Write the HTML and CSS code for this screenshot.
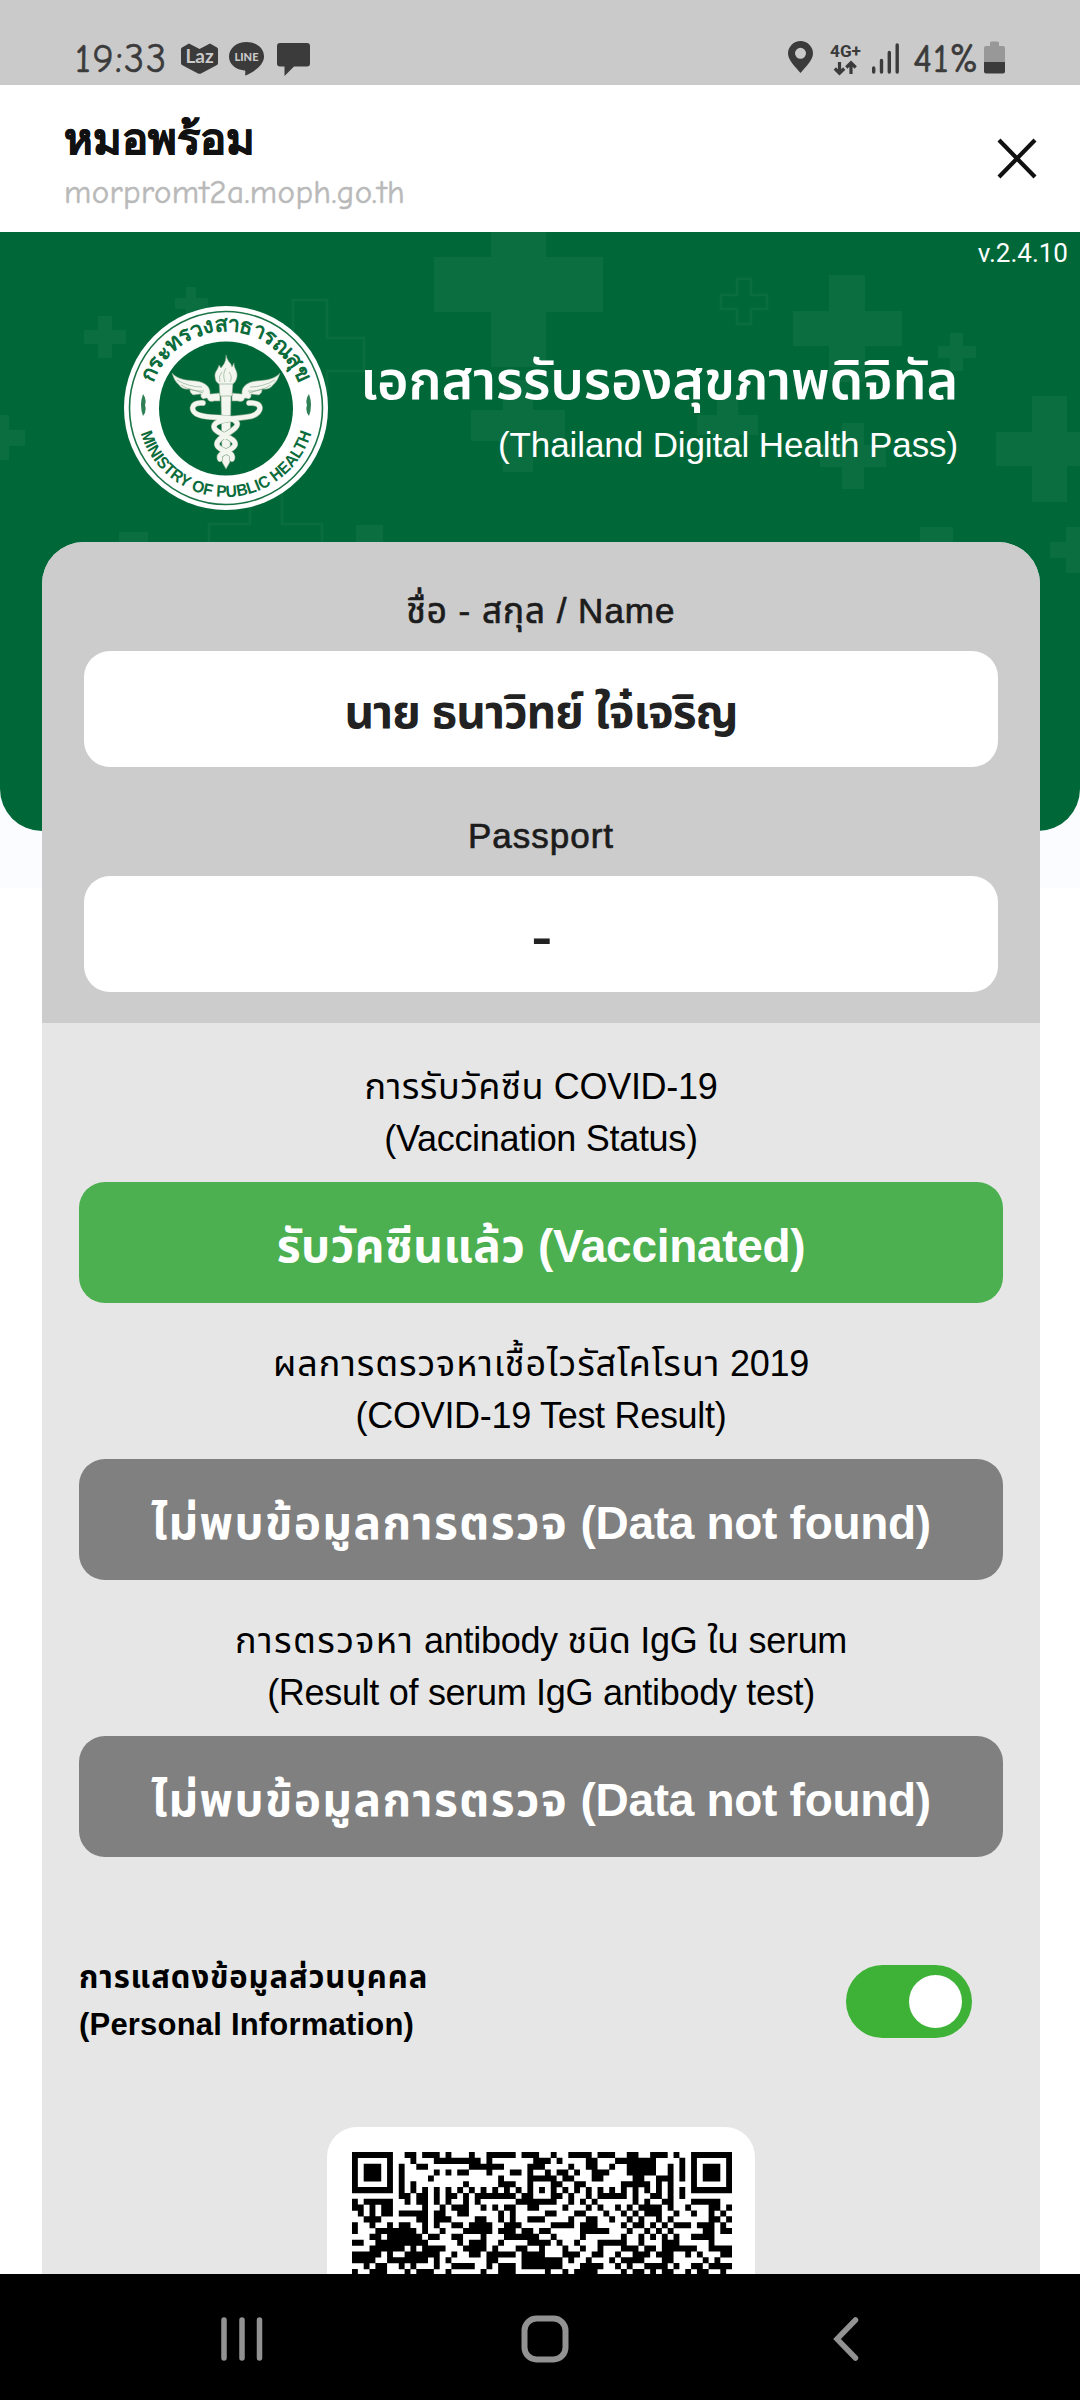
FILE: index.html
```html
<!DOCTYPE html>
<html lang="th">
<head>
<meta charset="utf-8">
<title>หมอพร้อม</title>
<link rel="stylesheet" href="styles.css">
</head>
<body>
<div class="status">
  <span class="time">19:33</span>
  <svg class="ic-laz" width="37" height="31" viewBox="0 0 37 31"><path d="M8 .5 18.500 6 29 .5 36 4.500Q37 5 37 6V20Q37 21.500 36 22L20 30.400Q18.500 31.200 17 30.400L1 22Q0 21.500 0 20V6Q0 5 1 4.500Z" fill="#3b3b3b"/><text x="18.500" y="20" class="laz-text">Laz</text></svg>
  <svg class="ic-line" width="35" height="34" viewBox="0 0 35 34"><path d="M17.500 0C27 0 35 6 35 14.500 35 22 27 29 16.500 33.500 15.500 33 17 30 16 28.500 7 28 0 22.500 0 14.500 0 6 8 0 17.500 0Z" fill="#3b3b3b"/><text x="17.500" y="19" class="line-text">LINE</text></svg>
  <svg class="ic-chat" width="33" height="34" viewBox="0 0 33 34"><path d="M3 0H30Q33 0 33 3V20.500Q33 23.500 30 23.500H17L7.500 33V23.500H3Q0 23.500 0 20.500V3Q0 0 3 0Z" fill="#3b3b3b"/></svg>
  <span class="spacer"></span>
  <svg class="ic-pin" width="25" height="32" viewBox="0 0 25 32"><path d="M12.500 0A12.500 12.500 0 0 1 25 12.500C25 19 17.500 26 12.500 32 7.500 26 0 19 0 12.500A12.500 12.500 0 0 1 12.500 0ZM12.500 6.800A5.500 5.500 0 1 0 12.500 17.800 5.500 5.500 0 1 0 12.500 6.800Z" fill="#3b3b3b" fill-rule="evenodd"/></svg>
  <svg class="ic-net" width="32" height="34" viewBox="0 0 32 34"><text x="0" y="14.500" class="net-text" textLength="31" lengthAdjust="spacingAndGlyphs">4G+</text><path d="M9.500 20V31M4.800 26.500 9.500 31.200 14.200 26.500M21 32V21M16.300 25.500 21 20.800 25.700 25.500" fill="none" stroke="#3b3b3b" stroke-width="3.200"/></svg>
  <svg class="ic-signal" width="27" height="31" viewBox="0 0 27 31"><path d="M1.700 25V29M9.500 17.500V29M17.300 9.500V29M25.200 2V29" stroke="#3b3b3b" stroke-width="3.400" stroke-linecap="round"/></svg>
  <span class="pct">41%</span>
  <svg class="ic-batt" width="21" height="33" viewBox="0 0 21 33"><path d="M6 5V2Q6 .5 7.500 .5H13.500Q15 .5 15 2V5H19Q21 5 21 7V21H0V7Q0 5 2 5Z" fill="#989898"/><path d="M0 21H21V30.500Q21 32.500 19 32.500H2Q0 32.500 0 30.500Z" fill="#3b3b3b"/></svg>
</div>

<header class="bar">
  <div class="bar-text">
    <div class="bar-title">หมอพร้อม</div>
    <div class="bar-url">morpromt2a.moph.go.th</div>
  </div>
  <svg class="close" width="40" height="41" viewBox="0 0 40 41"><path d="M2 2 38 39M38 2 2 39" stroke="#111" stroke-width="4.200"/></svg>
</header>

<main class="page">
  <section class="hero">
    <svg class="crosses" width="1080" height="599" viewBox="0 232 1080 599">
      <g class="solid">
        <path d="M98 316h14v14h14v14h-14v14H98v-14H84v-14h14z"/>
        <path d="M186 287h10v11h12v11h-12v11h-10v-11h-11v-11h11z"/>
        <path d="M-16 415H9v15h16v16H9v14h-25z"/>
        <path d="M491 232h55v25h57v55h-57v55h-55v-55h-57v-55h57z"/>
        <path d="M503 380h30v30h32v31h-32v31h-30v-31h-32v-31h32z"/>
        <path d="M119 532h29v30h-29z"/><path d="M356 525h27v30h-27z"/>
        <path d="M829 275h36v36h37v35h-37v36h-36v-36h-36v-35h36z"/>
        <path d="M950 333h13v13h13v12h-13v13h-13v-13h-12v-12h12z"/>
        <path d="M717 394h21v21h20v20h-20v21h-21v-21h-20v-20h20z"/>
        <path d="M842 423h22v22h22v22h-22v22h-22v-22h-22v-22h22z"/>
        <path d="M1032 396h35v36h37v34h-37v36h-35v-36h-36v-34h36z"/>
        <path d="M920 527h33v30h-33z"/><path d="M1066 527h30v46h-30v-15h-16v-16h16z"/>
      </g>
      <g class="outline">
        <path d="M293 300h34v38h37v33h-37v37h-34v-37h-36v-33h36z"/>
        <path d="M250 487h32v37h40v33h-40v37h-32v-37h-41v-33h41z"/>
        <path d="M737 279h14v16h16v14h-16v15h-14v-15h-16v-14h16z"/>
      </g>
    </svg>
    <span class="version">v.2.4.10</span>
    <svg class="seal" width="204" height="204" viewBox="0 0 204 204">
      <defs>
        <path id="arc-top" d="M25.500 102A76.500 76.500 0 0 1 178.500 102"/>
        <path id="arc-bottom" d="M13 102A89 89 0 0 0 191 102"/>
      </defs>
      <circle cx="102" cy="102" r="102" fill="#fff"/>
      <circle cx="102" cy="102" r="96.500" fill="none" stroke="#1b7446" stroke-width="1.600"/>
      <circle cx="102" cy="102.500" r="67" fill="#006838"/>
      <text class="seal-th"><textPath href="#arc-top" startOffset="50%" text-anchor="middle" textLength="190">กระทรวงสาธารณสุข</textPath></text>
      <text class="seal-en"><textPath href="#arc-bottom" startOffset="50%" text-anchor="middle" textLength="228" lengthAdjust="spacingAndGlyphs">MINISTRY OF PUBLIC HEALTH</textPath></text>
      <path d="M19 88q-4 11 0 22q4-5 2-11q2-6-2-11zM185 88q4 11 0 22q-4-5-2-11q-2-6 2-11z" fill="#2f7f55"/>
      <g fill="#f3f6ee" stroke="#7fa588" stroke-width=".6">
        <path d="M48 67C54 74 63 74 72 75 81 76 87 81 86 88L96 87V95H90Q85 97 83 92L79 93Q76 91 77 88L69 89Q65 86 66 83 58 84 55 79 50 75 48 67Z"/>
        <path d="M156 67C150 74 141 74 132 75 123 76 117 81 118 88L108 87V95H114Q119 97 121 92L125 93Q128 91 127 88L135 89Q139 86 138 83 146 84 149 79 154 75 156 67Z"/>
        <path d="M53 74Q65 81 78 81M57 79Q68 86 80 85M66 83 79 87M151 74Q139 81 126 81M147 79Q136 86 124 85M138 83 125 87" fill="none"/>
        <path d="M97 89H107L106 156 102 163 98 156Z"/>
        <path d="M95 77H109L108 90H96Z"/>
        <path d="M102 49C104 57 107 56 108 61L110 57C110 63 114 65 113 71Q112 76 109 78H95Q91 76 91 71C90 66 94 64 95 59L97 62C99 59 102 57 102 49Z"/>
        <path d="M96 76Q94 70 98 66M101 76Q98 68 102 62M106 76Q109 71 105 66" fill="none"/>
      </g>
      <g fill="none" stroke-linecap="round">
        <path class="snake-edge" d="M79 97C66 96 66 106 75 109 88 114 108 108 113 117 116 124 91 131 93 139 95 146 111 145 108 153M125 97C139 96 139 106 128 110 116 113 92 112 90 120 89 128 113 131 111 139 108 146 93 146 96 153"/>
        <path class="snake" d="M79 97C66 96 66 106 75 109 88 114 108 108 113 117 116 124 91 131 93 139 95 146 111 145 108 153M125 97C139 96 139 106 128 110 116 113 92 112 90 120 89 128 113 131 111 139 108 146 93 146 96 153"/>
      </g>
    </svg>
    <div class="hero-text">
      <h1 class="hero-title">เอกสารรับรองสุขภาพดิจิทัล</h1>
      <p class="hero-sub">(Thailand Digital Health Pass)</p>
    </div>
  </section>

  <article class="card">
    <section class="identity">
      <h2 class="label">ชื่อ - สกุล / Name</h2>
      <div class="field">นาย ธนาวิทย์ ใจ๋เจริญ</div>
      <h2 class="label">Passport</h2>
      <div class="field"><span class="dash">-</span></div>
    </section>
    <section class="results">
      <div class="result">
        <p class="caption"><span class="th-s">การรับวัคซีน</span> COVID-19<br>(Vaccination Status)</p>
        <div class="badge ok"><span class="th-s">รับวัคซีนแล้ว</span> (Vaccinated)</div>
      </div>
      <div class="result">
        <p class="caption"><span class="th-m">ผลการตรวจหาเชื้อไวรัสโคโรนา</span> 2019<br>(COVID-19 Test Result)</p>
        <div class="badge"><span class="th-l">ไม่พบข้อมูลการตรวจ</span> (Data not found)</div>
      </div>
      <div class="result">
        <p class="caption"><span class="th-l">การตรวจหา</span> antibody ชนิด IgG ใน serum<br>(Result of serum IgG antibody test)</p>
        <div class="badge"><span class="th-l">ไม่พบข้อมูลการตรวจ</span> (Data not found)</div>
      </div>
    </section>
    <section class="privacy">
      <p class="privacy-text"><span class="th-m">การแสดงข้อมูลส่วนบุคคล</span><br>(Personal Information)</p>
      <div class="toggle"><div class="knob"></div></div>
    </section>
    <div class="qr-card"><svg class="qr" width="380" height="380" viewBox="0 0 65 65"><path id="qr-modules"/></svg></div>
  </article>
</main>

<nav class="nav">
  <svg width="43" height="44" viewBox="0 0 43 44"><path d="M4 3V41M22 3V41M39.500 3V41" stroke="#929292" stroke-width="5.500" stroke-linecap="round"/></svg>
  <svg class="home" width="48" height="48" viewBox="0 0 48 48"><rect x="3.500" y="3.500" width="41" height="41" rx="12" fill="none" stroke="#929292" stroke-width="6"/></svg>
  <svg class="back" width="27" height="44" viewBox="0 0 27 44"><path d="M22.500 3 4 22 22.500 41" fill="none" stroke="#929292" stroke-width="5.500" stroke-linecap="round"/></svg>
</nav>
<script src="qr.js"></script>
</body>
</html>
```
FILE: styles.css
```css
* { box-sizing: border-box; }
html, body { margin: 0; height: 2400px; overflow: hidden; }
body {
  display: flex; flex-direction: column; background: #fff; color: #000;
  font-family: "Liberation Sans", "Noto Sans Thai", sans-serif;
}
h1, h2, p { margin: 0; font-weight: normal; }
svg { display: block; flex: none; }

/* status bar */
.status { height: 85px; background: #cacaca; display: flex; align-items: flex-start; padding: 0 75px 0 75px; color: #3b3b3b; flex: none; }
.time, .pct { font: 40px/50px "Comic Neue", cursive; margin-top: 34px; white-space: nowrap; -webkit-text-stroke: .6px #3b3b3b; }
.time { width: 106px; letter-spacing: 1.6px; }
.pct { width: 71px; margin-left: 14px; letter-spacing: .7px; }
.spacer { flex: 1; }
.ic-laz { margin-top: 43px; }
.ic-line { margin: 42px 0 0 11px; }
.ic-chat { margin: 43px 0 0 13px; }
.ic-pin { margin-top: 41px; }
.ic-net { margin: 42px 0 0 17px; }
.ic-signal { margin: 43px 0 0 10px; }
.ic-batt { margin-top: 41px; }
.laz-text { font: bold 19px Lato, sans-serif; fill: #cacaca; text-anchor: middle; }
.line-text { font: 900 11px Lato, sans-serif; fill: #cacaca; text-anchor: middle; }
.net-text { font: bold 17px Roboto, sans-serif; fill: #3b3b3b; }

/* app bar */
.bar { height: 147px; display: flex; justify-content: space-between; align-items: flex-start; padding: 0 43px 0 64px; flex: none; background: #fff; }
.bar-text { font-family: "Comic Neue", cursive; }
.bar-title { font-size: 43.5px; font-weight: bold; line-height: 60px; margin-top: 25px; color: #111; -webkit-text-stroke: .8px #111; }
.bar-url { font-size: 33px; line-height: 40px; margin-top: 2px; color: #b9b9b9; letter-spacing: .4px; -webkit-text-stroke: .5px #b9b9b9; }
.close { margin-top: 53px; }

/* page */
.page { height: 2042px; overflow: hidden; flex: none; background: linear-gradient(#fafcff 656px, #fff 656px); }
.hero { height: 599px; background: #006838; border-radius: 0 0 42px 42px; position: relative; display: flex; align-items: flex-start; justify-content: space-between; padding: 74px 122px 0 124px; overflow: hidden; color: #fff; }
.crosses { position: absolute; left: 0; top: 0; }
.solid { fill: #fff; fill-opacity: .042; }
.outline { fill: none; stroke: #fff; stroke-opacity: .04; stroke-width: 2.5; }
.version { position: absolute; right: 12px; top: 5px; font: 26px/32px Roboto, sans-serif; }
.seal { position: relative; }
.seal-th { font: bold 22px "Comic Neue", cursive; fill: #0b6b3b; }
.seal-en { font: bold 16.5px "Liberation Sans", sans-serif; fill: #0b6b3b; }
.snake-edge { stroke: #7fa588; stroke-width: 6; }
.snake { stroke: #f3f6ee; stroke-width: 4.8; }
.hero-text { position: relative; text-align: right; white-space: nowrap; padding-top: 39px; }
.hero-title { font-size: 54px; line-height: 70px; font-weight: 600; letter-spacing: -.2px; }
.hero-sub { font-size: 35px; line-height: 60px; letter-spacing: -.1px; }

/* card */
.card { width: 998px; margin: -289px auto 0 42px; position: relative; background: #e6e6e6; border-radius: 42px 42px 0 0; overflow: hidden; }
.identity { background: #ccc; height: 481px; padding: 43px 42px 0; text-align: center; color: #1c1c1c; }
.label { font-size: 35px; line-height: 52px; margin-bottom: 14px; letter-spacing: 1px; -webkit-text-stroke: .7px #1c1c1c; white-space: nowrap; }
.field { height: 116px; border-radius: 26px; background: #fff; margin-bottom: 43px; font-size: 46px; line-height: 116px; padding-top: 3px; font-weight: bold; letter-spacing: -1px; color: #222; }
.dash { display: inline-block; transform: scaleX(1.35); }
.results { padding: 38px 37px 0; }
.result { margin-bottom: 35px; text-align: center; }
.caption { font-size: 36px; line-height: 52px; margin-bottom: 17px; letter-spacing: -.3px; white-space: nowrap; }
.badge { height: 121px; border-radius: 26px; background: #808080; color: #fff; font-size: 46px; font-weight: bold; line-height: 121px; padding-top: 4px; letter-spacing: -.3px; white-space: nowrap; }
.ok { background: #4caf50; }
.th-s { letter-spacing: .5px; }
.th-m { letter-spacing: .9px; }
.th-l { letter-spacing: 1.4px; }
.privacy { display: flex; justify-content: space-between; align-items: center; padding: 0 68px 0 37px; margin-top: 97px; }
.privacy-text { font-size: 31px; line-height: 47px; font-weight: bold; letter-spacing: .2px; }
.toggle { width: 126px; height: 73px; border-radius: 37px; background: #3eb237; display: flex; align-items: center; justify-content: flex-end; padding-right: 10px; }
.knob { width: 53px; height: 53px; border-radius: 50%; background: #fff; }
.qr-card { width: 428px; height: 428px; margin: 79px 0 0 285px; border-radius: 30px; background: #fff; padding: 25px 0 0 25px; }

/* system navigation */
.nav { height: 126px; background: #000; display: flex; align-items: center; padding: 4px 0 0 220px; flex: none; }
.home { margin-left: 258px; }
.back { margin-left: 264px; }
```
FILE: qr.js
```js
// Each line lists the dark modules of one QR row as column numbers or ranges.
const rows = `0-6 9-10 12-14 16 20 23-27 29-31 34 37-40 42-44 47-48 51-53 55 58-64
0 6 10 14-21 23 31-33 35 40-41 45-51 56 58 64
0 2-4 6 8 11-12 20-25 30-32 37 40-41 44 47-51 54 56 58 60-62 64
0 2-4 6 8 14 16 18-19 23 27-28 30 33 35-36 38 41-43 47-51 54 56 58 60-62 64
0 2-4 6 8 13 25 30-34 36-37 41-42 48-49 52-54 56 58 60-62 64
0 6 8 10 19 25-27 30 34-35 38-39 46-50 52 54 58 64
0-6 8 10 12 14 16 18 20 22 24 26 28 30 32 34 36 38 40 42 44 46 48 50 52 54 56 58-64
8-9 11-12 14 16-17 19 21-27 29-30 34-35 37 40 42-46 48 51-52 54 56
0 2-6 9 11-12 14 16 19 21 28-34 37 39 41 48 50 53-54 58-62
0-1 3 5-6 12 15 17-19 22 24 26-27 30-31 36 40 42 45 47 49-52 54 57 61-62 64
1 3 5-6 8-12 14-15 18-19 25 27 33-34 38-39 43 46 48 50-52 55 58 61 63
2-4 11-12 14-16 21-22 25 27 30-32 37 40-41 44 47 49 52 54 61-62 64
0 3 6 8-9 12 14 17-18 20-23 26-28 34-37 39-41 46 48-49 51 53 55-57 59-61 63
0 4-10 12 15 19-23 25-27 29-30 32-33 39-43 47 50 52 54 60-61 63-64
3-4 6-11 13-14 17-18 22 26-31 34 39 46 49 51 53 55 58-61
0-1 4-12 18 20-22 25 30-33 35 38 42-46 49 53-55 61
3-8 10 12-15 19-22 24 28-29 32 36 39 42 46-48 50-51 53-58 61-64
0-4 6 9-14 17 20-21 23-27 29-32 36-38 41-42 45 48-50 52-54 57 59 63-64
0-3 6-12 14 16 23-24 29-35 37 40 44 46-49 53-54 60 62
2 4-5 8 10 14 17-20 23 25-27 29-35 39-42 45 47 50-53 55 58-59 61-64
0 3-5 9 11-13 16 22 25-27 33 36 38-41 46 48-49 51 53-54 57 59-60 63`.split("\n");
let d = "";
rows.forEach((row, y) => row.split(" ").forEach(run => {
  const [a, b = a] = run.split("-").map(Number);
  const w = b - a + 1;
  d += `M${a} ${y}h${w}v1.04h-${w}z`;
}));
document.getElementById("qr-modules").setAttribute("d", d);
```
